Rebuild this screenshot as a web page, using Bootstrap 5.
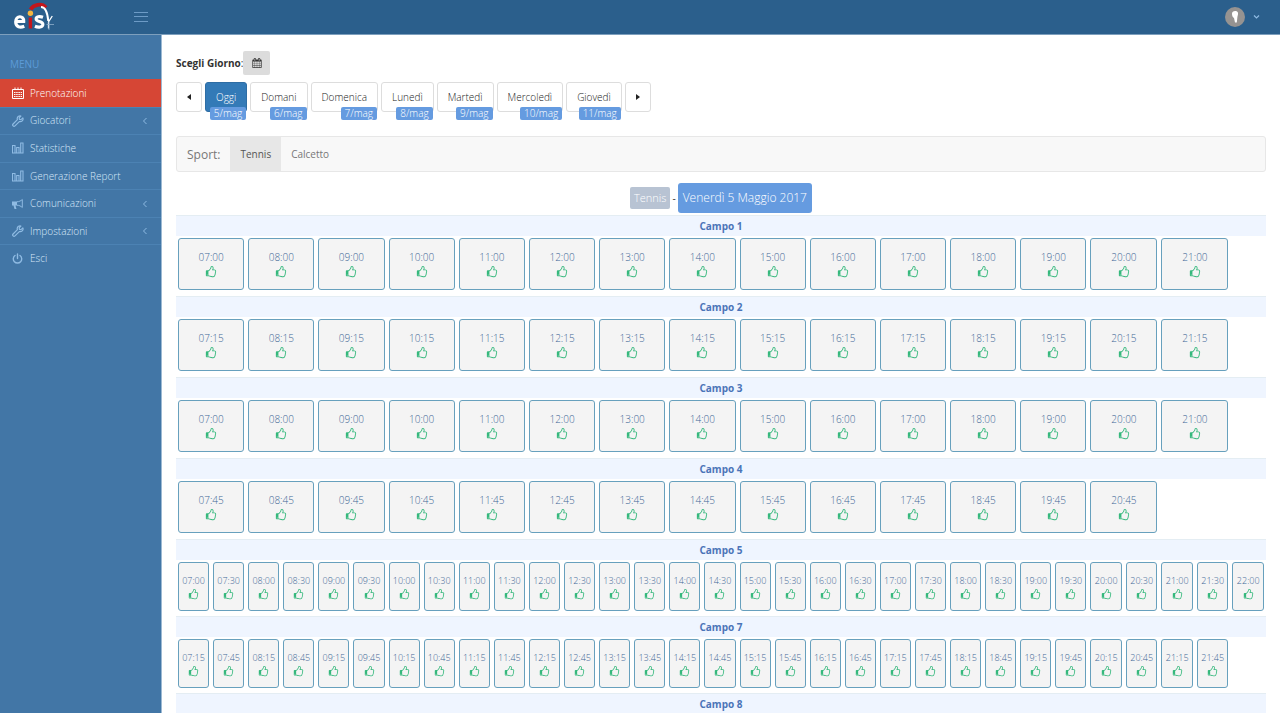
<!DOCTYPE html>
<html lang="it">
<head>
<meta charset="utf-8">
<meta name="viewport" content="width=device-width, initial-scale=1">
<title>Prenotazioni</title>
<link href="https://cdn.jsdelivr.net/npm/bootstrap@5.3.0/dist/css/bootstrap.min.css" rel="stylesheet">
<style>
  body { font-family: "Open Sans", sans-serif; font-size: 10px; line-height: 15px; color: #333; background: #fff; }
  a { text-decoration: none; }
  svg { display: block; flex: none; }
  .page-top { background: #2b5f8c; height: 35px; border-bottom: 1px solid #7d9fbd; }
  .brand-zone { width: 162px; padding-left: 13px; padding-right: 14px; }
  .icon-btn { background: none; border: 0; padding: 0; color: #6d9bc6; }
  .page-side { width: 162px; background: #4276a6; min-height: calc(100vh - 35px); border-right: 1px solid #9cb9d3; }
  .side-heading { color: #5c9bd8; font-weight: 400; font-size: 10px; margin: 22px 0 7px 10px; line-height: 15px; }
  .side-menu { height: 193px; }
  .side-menu li { border-top: 1px solid #4c82b3; }
  .side-menu a { color: #d6e7f8; font-weight: 300; gap: 6px; padding: 0 13px 0 12px; height: 100%; }
  .side-menu a svg { color: #8fbbe3; }
  .side-menu li.on { background: #d64635; border-color: #d64635; }
  .side-menu li.on a, .side-menu li.on svg { color: #fff; }
  main { padding: 16px 14px 0; min-width: 0; }
  .pick-btn { background: #dcdcdc; color: #333; border: 0; border-radius: 2px; width: 27px; height: 24px; }
  .day-row { gap: 3px; margin-top: 7px; }
  .day-btn { position: relative; height: 30px; border: 1px solid #ddd; border-radius: 3px; background: #fff; color: #222; font-weight: 300; padding: 0 10px; }
  .day-btn.on { background: #337ab7; border-color: #2e6da4; color: #fff; }
  .date-tag { position: absolute; right: 0; bottom: -9px; background: #659be0; color: #fff; line-height: 13px; padding: 0 4px; border-radius: 2px; }
  .sport-bar { background: #f8f8f8; border: 1px solid #e7e7e7; border-radius: 3px; height: 36px; margin-top: 24px; padding-left: 10px; color: #777; }
  .sport-title { font-size: 12px; margin-right: 10px; }
  .sport-bar a { color: #777; padding: 0 10px; }
  .sport-bar a.on { background: #e7e7e7; color: #555; }
  .title-row { height: 43px; padding-top: 9px; gap: 2px; }
  .sport-tag { background: #b8c3d3; color: #fff; font-size: 11px; font-weight: 300; line-height: 22px; padding: 0 4px; border-radius: 2px; }
  .day-tag { background: #659be0; color: #fff; font-size: 12px; font-weight: 300; line-height: 30px; padding: 0 5px; border-radius: 3px; }
  .slots { width: 100%; table-layout: fixed; border-collapse: separate; border-spacing: 0; }
  .slots .wide-span { width: 3.22%; }
  .slots th { height: 21px; padding: 0; background: #eff5ff; color: #4b74b8; text-align: center; font-weight: 700; border-top: 1px solid #e4edf3; line-height: 20px; }
  .slots td { padding: 2px 2px 6px; height: 60px; }
  .slots .half td { height: 56px; padding-bottom: 5px; }
  .slot-btn { width: 100%; height: 52px; background: #f4f4f4; border: 1px solid #67a0bd; border-radius: 3px; color: #3f6896; font-weight: 300; padding: 0; line-height: 14px; }
  .half .slot-btn { height: 49px; font-size: 9px; }
  .slot-btn svg { color: #35b87c; margin: 2px auto 0; }
  .half .slot-btn svg { margin-top: 1px; }
</style>
</head>
<body>
<svg width="0" height="0" class="position-absolute" aria-hidden="true">
  <symbol id="thumb" viewBox="0 0 1792 1792"><path fill="currentColor" d="M384 1344q0-26-19-45t-45-19-45 19-19 45 19 45 45 19 45-19 19-45zm1152-576q0-51-39-89.500t-89-38.500h-352q0-58 48-159.500t48-160.500q0-98-32-145t-128-47q-26 26-38 85t-30.500 125.500-59.500 109.500q-22 23-77 91-4 5-23 30t-31.500 41-34.500 42.500-40 44-38.500 35.500-40 27-35.500 9h-32v640h32q13 0 31.500 3t33 6.500 38 11 35 11.500 35.500 12.500 29 10.500q211 73 342 73h121q192 0 192-167 0-26-5-56 30-16 47.500-52.500t17.500-73.500-18-69q53-50 53-119 0-25-10-55.500t-25-47.500q32-1 53.500-47t21.500-81zm128-1q0 89-49 163 9 33 9 69 0 77-38 144 3 21 3 43 0 101-60 178 1 139-85 219.500t-227 80.500h-129q-96 0-189.500-22.500t-216.500-65.500q-116-40-138-40h-288q-53 0-90.500-37.500t-37.500-90.500v-640q0-53 37.500-90.500t90.500-37.500h274q36-24 137-155 58-75 107-128 24-25 35.500-85.500t30.500-126.500 62-108q39-37 90-37 84 0 151 32.500t102 101.500 35 186q0 93-48 192h176q104 0 180 76t76 179z"/></symbol>
  <symbol id="wrench" viewBox="0 0 12 12"><path d="M10.900 2.900 9 4.600 7.400 4.300 7.200 2.900 8.900 1.100C7.300.500 5.400 1.500 5.200 3.400q0 .700.200 1.300L1.100 9a1.300 1.300 0 0 0 1.900 1.900L7.300 6.600C9.500 7.200 11.700 5.200 10.900 2.900z" fill="none" stroke="currentColor" stroke-width="1.200" stroke-linejoin="round"/></symbol>
  <symbol id="bars" viewBox="0 0 12 12"><path d="M.500 3.500h2.500v7.500H.500zM4.700 5.500h2.300v5.500H4.700zM8.700 1H11v10H8.700zM0 11h11.500" fill="none" stroke="currentColor" stroke-width="1.100"/></symbol>
  <symbol id="chev" viewBox="0 0 6 8"><path d="M4.500 1 1.500 4l3 3" fill="none" stroke="currentColor"/></symbol>
</svg>

<header class="page-top d-flex align-items-center justify-content-between">
  <div class="brand-zone d-flex align-items-center justify-content-between">
    <a href="#" aria-label="eisy">
      <svg width="42" height="30" viewBox="0 0 42 30">
        <g fill="none">
          <path d="M2.500 19.500h8.200c.500-6.500-8-6.300-8 .300 0 5.600 4.700 6 8.600 4.400" stroke="#fff" stroke-width="3.200"/>
          <path d="M17.400 15.500V26.500" stroke="#c4161c" stroke-width="3.400"/>
          <path d="M30 15.200c-3.300-1.200-6.900-.600-6.900 1.700 0 3 6.800 2.200 6.800 5.300 0 3.200-4.700 3.500-8 2.100" stroke="#fff" stroke-width="3.100"/>
          <path d="M17.500 7.500C20.500 2.500 28.500.800 33 5.500" stroke="#c4161c" stroke-width="3.800"/>
          <path d="M28 5c4.500 0 6.500 5.500 7.300 14" stroke="#fff" stroke-width="2"/>
          <path d="m39.300 14-3.800 6v6.500" stroke="#fff" stroke-width="1.300"/>
          <path d="M33.500 22.500h7.500M36 20v8" stroke="#8faecb" stroke-width=".8"/>
        </g>
        <circle cx="17.400" cy="11.300" r="2.700" fill="#f4b63f"/>
      </svg>
    </a>
    <button class="icon-btn" type="button" aria-label="Menu">
      <svg width="14" height="12" viewBox="0 0 14 12"><path d="M0 1.500h14M0 5.500h14M0 10.500h14" stroke="currentColor" stroke-width="1"/></svg>
    </button>
  </div>
  <button class="icon-btn d-flex align-items-center me-3 pe-1 gap-2" type="button" aria-label="Profilo">
    <svg width="20" height="20" viewBox="0 0 20 20"><circle cx="10" cy="10" r="10" fill="#969391"/><path d="M7 7c-.500-3.500 5.500-4 6-1 .300 2-.700 3-.700 5l-.500 4.500h-1.800L9 11C7.500 10 7 8.500 7 7z" fill="#fff"/></svg>
    <svg width="7" height="6" viewBox="0 0 7 6"><path d="m1 1.500 2.500 2.500L6 1.500" fill="none" stroke="#8fbbe3" stroke-width="1.200"/></svg>
  </button>
</header>

<div class="d-flex align-items-stretch">
  <nav class="page-side flex-shrink-0">
    <h2 class="side-heading">MENU</h2>
    <ul class="side-menu list-unstyled d-flex flex-column mb-0">
      <li class="flex-fill on"><a href="#" class="d-flex align-items-center">
        <svg width="12" height="12" viewBox="0 0 12 12" fill="none" stroke="currentColor"><path d="M.500 2.500h11v9H.500zM3 .500V3M6 .500V3M9 .500V3"/><path d="M2 5.500h8M2 7.500h8M2 9.500h8" stroke-dasharray="1.500 .700"/></svg>
        <span>Prenotazioni</span></a></li>
      <li class="flex-fill"><a href="#" class="d-flex align-items-center"><svg width="12" height="12"><use href="#wrench"/></svg><span>Giocatori</span><svg class="ms-auto" width="6" height="8"><use href="#chev"/></svg></a></li>
      <li class="flex-fill"><a href="#" class="d-flex align-items-center"><svg width="12" height="12"><use href="#bars"/></svg><span>Statistiche</span></a></li>
      <li class="flex-fill"><a href="#" class="d-flex align-items-center"><svg width="12" height="12"><use href="#bars"/></svg><span>Generazione Report</span></a></li>
      <li class="flex-fill"><a href="#" class="d-flex align-items-center">
        <svg width="12" height="12" viewBox="0 0 12 12"><path d="M0 3.500h5v4H3.500l1 3.500H2.500l-1-3.500H0z" fill="currentColor"/><path d="M5 3.800c2 0 4-1 5.300-2.300v8C9 8.200 7 7.200 5 7.200" fill="none" stroke="currentColor"/></svg>
        <span>Comunicazioni</span><svg class="ms-auto" width="6" height="8"><use href="#chev"/></svg></a></li>
      <li class="flex-fill"><a href="#" class="d-flex align-items-center"><svg width="12" height="12"><use href="#wrench"/></svg><span>Impostazioni</span><svg class="ms-auto" width="6" height="8"><use href="#chev"/></svg></a></li>
      <li class="flex-fill"><a href="#" class="d-flex align-items-center">
        <svg width="12" height="12" viewBox="0 0 12 12" fill="none" stroke="currentColor" stroke-width="1.400" stroke-linecap="round"><path d="M3 2.500a4.200 4.200 0 1 0 5 0M5.500 1v4.500"/></svg>
        <span>Esci</span></a></li>
    </ul>
  </nav>

  <main class="flex-grow-1">
    <div class="d-flex align-items-center">
      <span id="pick-label"><b>Scegli Giorno</b>:</span>
      <button class="pick-btn d-flex align-items-center justify-content-center" type="button" aria-labelledby="pick-label">
        <svg width="10" height="10" viewBox="0 0 1792 1792"><path fill="currentColor" d="M192 1664h288v-288h-288v288zm352 0h320v-288h-320v288zm-352-352h288v-320h-288v320zm352 0h320v-320h-320v320zm-352-384h288v-288h-288v288zm736 736h320v-288h-320v288zm-384-736h320v-288h-320v288zm768 736h288v-288h-288v288zm-384-352h320v-320h-320v320zm-352-864v-288q0-13-9.500-22.500t-22.500-9.500h-64q-13 0-22.500 9.500t-9.500 22.500v288q0 13 9.500 22.500t22.500 9.500h64q13 0 22.500-9.500t9.500-22.500zm736 864h288v-320h-288v320zm-384-384h320v-288h-320v288zm384 0h288v-288h-288v288zm32-480v-288q0-13-9.500-22.500t-22.500-9.500h-64q-13 0-22.500 9.500t-9.500 22.500v288q0 13 9.500 22.500t22.500 9.500h64q13 0 22.500-9.500t9.500-22.500zm384-64v1280q0 52-38 90t-90 38h-1408q-52 0-90-38t-38-90v-1280q0-52 38-90t90-38h128v-96q0-66 47-113t113-47h64q66 0 113 47t47 113v96h384v-96q0-66 47-113t113-47h64q66 0 113 47t47 113v96h128q52 0 90 38t38 90z"/></svg>
      </button>
    </div>
    <div class="day-row d-flex">
      <button class="day-btn" type="button" aria-label="Precedente"><svg width="4" height="6" viewBox="0 0 4 6"><path d="M4 0v6L0 3z" fill="#222"/></svg></button>
      <button class="day-btn on" type="button">Oggi<span class="date-tag">5/mag</span></button>
      <button class="day-btn" type="button">Domani<span class="date-tag">6/mag</span></button>
      <button class="day-btn" type="button">Domenica<span class="date-tag">7/mag</span></button>
      <button class="day-btn" type="button">Lunedì<span class="date-tag">8/mag</span></button>
      <button class="day-btn" type="button">Martedì<span class="date-tag">9/mag</span></button>
      <button class="day-btn" type="button">Mercoledì<span class="date-tag">10/mag</span></button>
      <button class="day-btn" type="button">Giovedì<span class="date-tag">11/mag</span></button>
      <button class="day-btn" type="button" aria-label="Successivo"><svg width="4" height="6" viewBox="0 0 4 6"><path d="M0 0v6l4-3z" fill="#222"/></svg></button>
    </div>
    <nav class="sport-bar d-flex align-items-center">
      <span class="sport-title">Sport:</span>
      <a href="#" class="on h-100 d-flex align-items-center">Tennis</a>
      <a href="#" class="h-100 d-flex align-items-center">Calcetto</a>
    </nav>
    <div class="title-row d-flex align-items-center justify-content-center">
      <span class="sport-tag">Tennis</span><span>-</span><span class="day-tag">Venerdì 5 Maggio 2017</span>
    </div>
    <table class="slots">
      <colgroup id="cols"></colgroup>
      <tbody id="grid"></tbody>
    </table>
  </main>
</div>

<script src="https://cdn.jsdelivr.net/npm/bootstrap@5.3.0/dist/js/bootstrap.bundle.min.js"></script>
<script>
  // Each court: name, first slot in minutes, slot length, number of slots
  const courts = [
    ["Campo 1", 420, 60, 15], ["Campo 2", 435, 60, 15], ["Campo 3", 420, 60, 15], ["Campo 4", 465, 60, 14],
    ["Campo 5", 420, 30, 31], ["Campo 7", 435, 30, 30], ["Campo 8", 420, 30, 0]
  ];
  const columns = 31;
  const two = n => String(n).padStart(2, "0");
  document.getElementById("cols").innerHTML = '<col class="wide-span">'.repeat(26) + "<col>".repeat(columns - 26);
  document.getElementById("grid").innerHTML = courts.map(([name, start, step, count]) => {
    const half = step === 30;
    let cells = "";
    for (let i = 0; i < count; i++) {
      const t = start + i * step;
      const size = half ? 11 : 12;
      cells += `<td colspan="${half ? 1 : 2}"><button type="button" class="slot-btn">${two(Math.floor(t / 60))}:${two(t % 60)}<svg width="${size}" height="${size}"><use href="#thumb"/></svg></button></td>`;
    }
    const heading = `<tr><th colspan="${columns}" scope="colgroup">${name}</th></tr>`;
    return count ? `${heading}<tr class="${half ? "half" : ""}">${cells}</tr>` : heading;
  }).join("");
</script>
</body>
</html>
